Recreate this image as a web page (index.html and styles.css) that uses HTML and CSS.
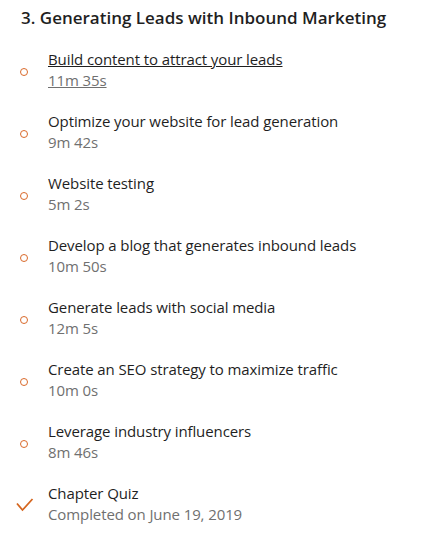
FILE: index.html
```html
<!DOCTYPE html>
<html>
<head>
<meta charset="utf-8">
<link rel="stylesheet" href="styles.css">
</head>
<body>
<section class="chapter">
  <h2 class="title">3. Generating Leads with Inbound Marketing</h2>
  <ul class="items">
    <li class="item active">
      <span class="icon circle"></span>
      <div class="text"><div class="name">Build content to attract your leads</div><div class="meta">11m 35s</div></div>
    </li>
    <li class="item">
      <span class="icon circle"></span>
      <div class="text"><div class="name">Optimize your website for lead generation</div><div class="meta">9m 42s</div></div>
    </li>
    <li class="item">
      <span class="icon circle"></span>
      <div class="text"><div class="name">Website testing</div><div class="meta">5m 2s</div></div>
    </li>
    <li class="item">
      <span class="icon circle"></span>
      <div class="text"><div class="name">Develop a blog that generates inbound leads</div><div class="meta">10m 50s</div></div>
    </li>
    <li class="item">
      <span class="icon circle"></span>
      <div class="text"><div class="name">Generate leads with social media</div><div class="meta">12m 5s</div></div>
    </li>
    <li class="item">
      <span class="icon circle"></span>
      <div class="text"><div class="name">Create an SEO strategy to maximize traffic</div><div class="meta">10m 0s</div></div>
    </li>
    <li class="item">
      <span class="icon circle"></span>
      <div class="text"><div class="name">Leverage industry influencers</div><div class="meta">8m 46s</div></div>
    </li>
    <li class="item">
      <span class="icon check"><svg width="18" height="14" viewBox="0 0 18 14"><path d="M1 5.5 L6.5 12 L16.5 1" fill="none" stroke="#d5661f" stroke-width="1.8"/></svg></span>
      <div class="text"><div class="name">Chapter Quiz</div><div class="meta">Completed on June 19, 2019</div></div>
    </li>
  </ul>
</section>
</body>
</html>
```

FILE: styles.css
```css
html, body { margin: 0; padding: 0; background: #fff; }
body { font-family: "Open Sans", "Noto Sans", sans-serif; color: #222; }
.chapter { padding: 6px 0 0 21px; }
.title { margin: 0; font-size: 17px; font-weight: 600; line-height: 24px; color: #1f1f1f; }
.items { list-style: none; margin: 9px 0 0 0; padding: 0; }
.item { display: flex; align-items: center; height: 62px; }
.icon { width: 27px; flex: none; display: flex; align-items: center; padding-top: 3px; }
.circle::before { content: ""; display: block; width: 6px; height: 6px; border: 1.6px solid #d9692a; border-radius: 50%; margin-left: -1px; }
.check { margin-left: -5px; width: 32px; padding-top: 2px; }
.text { font-size: 15px; line-height: 21px; letter-spacing: -0.1px; }
.name { color: #1f1f1f; }
.meta { color: #707070; }
.active .name, .active .meta { text-decoration: underline; }
```
